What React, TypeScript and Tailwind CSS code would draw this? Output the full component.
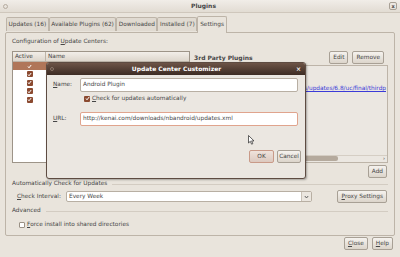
const Btn = ({ children, w, focus }: { children: React.ReactNode; w?: string; focus?: boolean }) => (
  <div
    className={`h-[13px] ${w ?? ""} px-[3px] flex items-center justify-center rounded-[2px] border ${
      focus ? "border-[#c99a88] bg-gradient-to-b from-[#efe3dc] to-[#dcc9bf]" : "border-[#a8a095] bg-gradient-to-b from-[#f5f2ee] to-[#dcd5cb]"
    } text-[#464646]`}
  >
    {children}
  </div>
);

const Check = ({ white }: { white?: boolean }) =>
  white ? (
    <div className="w-[6px] h-[6px] rounded-[1px] border border-[#9a9185] bg-white" />
  ) : (
    <div className="w-[6px] h-[6px] rounded-[1px] bg-[#8b4a30] flex items-center justify-center">
      <svg width="5" height="5" viewBox="0 0 5 5">
        <path d="M1 2.5 L2 3.8 L4.2 1" stroke="#fff" strokeWidth="1" fill="none" />
      </svg>
    </div>
  );

const U = ({ c }: { c: string }) => <span className="underline">{c}</span>;

export default function App() {
  const tabs = ["Updates (16)", "Available Plugins (62)", "Downloaded", "Installed (7)"];
  return (
    <div className="relative w-[400px] h-[257px] overflow-hidden bg-[#e9e4dc] text-[5.8px] leading-none text-[#464646] font-['DejaVu_Sans',sans-serif]">
      {/* window title */}
      <div className="h-[13px] flex items-center px-[3px] bg-gradient-to-b from-[#f1ede8] to-[#e2dcd3] border-b border-[#cfc7bc]">
        <div className="w-[5px] h-[5px] rounded-full border border-[#b5ab9f]" />
        <div className="flex-1 text-center font-bold pl-[10px] text-[6px]">Plugins</div>
        <div className="w-[8px] h-[8px] rounded-[2px] border border-[#a8a095] flex items-center justify-center text-[5px] font-bold">
          x
        </div>
      </div>

      {/* tabs */}
      <div className="mt-[1px] h-[18px] flex items-end pl-[6px] relative z-10">
        {tabs.map((t) => (
          <div
            key={t}
            className="h-[14px] px-[1.5px] flex items-center border border-b-0 border-[#bdb4a8] rounded-t-[2px] bg-[#e0dad1] mb-px"
          >
            {t}
          </div>
        ))}
        <div className="h-[17px] px-[2px] flex items-center border border-b-0 border-[#bdb4a8] rounded-t-[2px] bg-[#e9e4dc] -mb-px relative">
          Settings
        </div>
      </div>

      {/* panel */}
      <div className="mx-[5px] h-[204px] border border-[#bdb4a8] rounded-[2px] px-[6px] flex flex-col">
        <div className="mt-[6px] h-[6px]">
          Configuration of <U c="U" />pdate Centers:
        </div>

        <div className="mt-[6px] flex gap-[3px] h-[127px]">
          {/* table */}
          <div className="w-[178px] h-[112px] border border-[#9d9488] bg-white flex flex-col">
            <div className="h-[10px] flex bg-gradient-to-b from-[#f2eee9] to-[#ddd6cc] border-b border-[#bdb4a8]">
              <div className="w-[33px] pl-[2px] flex items-center border-r border-[#bdb4a8]">Active</div>
              <div className="pl-[2px] flex items-center">Name</div>
            </div>
            <div className="h-[8px] bg-[#b07659] flex">
              <div className="w-[33px] flex items-center justify-center">
                <svg width="5" height="5" viewBox="0 0 5 5">
                  <path d="M1 2.5 L2 3.8 L4.2 1" stroke="#fff" strokeWidth="1" fill="none" />
                </svg>
              </div>
            </div>
            {[0, 1, 2, 3].map((i) => (
              <div key={i} className="h-[8.5px] flex">
                <div className="w-[33px] flex items-center justify-center">
                  <Check />
                </div>
              </div>
            ))}
          </div>

          {/* right side */}
          <div className="flex-1 flex flex-col">
            <div className="h-[13px] flex items-center">
              <div className="font-bold flex-1 pl-[1px] text-[6px]">3rd Party Plugins</div>
              <Btn>Edit</Btn>
              <div className="w-[4px]" />
              <Btn>Remove</Btn>
              <div className="w-[4px]" />
            </div>
            <div className="mt-[1px] h-[98px] border border-[#bdb4a8] bg-[#ebe7e1] flex flex-col">
              <div className="flex-1 pt-[20px] flex justify-end pr-[1px]">
                <span className="text-[#3b3bd8] underline whitespace-nowrap">s/updates/6.8/uc/final/thirdp</span>
              </div>
              <div className="h-[6px] mb-[1px] flex items-center border-t border-[#d5cec4]">
                <div className="ml-[105px] w-[39px] h-[5px] rounded-[2px] bg-[#b5aa9d]" />
                <div className="flex-1" />
                <div className="text-[5px] pr-[2px]">›</div>
              </div>
            </div>
            <div className="mt-[2px] flex justify-end pr-[1px]">
              <Btn>Add</Btn>
            </div>
          </div>
        </div>

        <div className="mt-[3px] h-[6px] flex items-center gap-[5px]">
          <span className="whitespace-nowrap">Automatically Check for Updates</span>
          <div className="flex-1 border-t border-[#d3ccc2]" />
        </div>

        <div className="mt-[3px] h-[13px] flex items-center pl-[5px]">
          <div className="w-[49px]">
            <U c="C" />heck Interval:
          </div>
          <div className="w-[246px] h-[11px] bg-white border border-[#b8afa3] rounded-[2px] flex items-center">
            <div className="flex-1 pl-[2px]">Every Week</div>
            <div className="w-[10px] h-full border-l border-[#c9c1b6] bg-[#ebe6df] flex items-center justify-center">
              <svg width="5" height="4" viewBox="0 0 5 4">
                <path d="M0.8 1 L2.5 3 L4.2 1" stroke="#555" strokeWidth="0.9" fill="none" />
              </svg>
            </div>
          </div>
          <div className="flex-1" />
          <Btn>
            <span>
              <U c="P" />roxy Settings
            </span>
          </Btn>
          <div className="w-[1px]" />
        </div>

        <div className="mt-[5px] h-[6px] flex items-center gap-[5px]">
          <span>Advanced</span>
          <div className="flex-1 border-t border-[#d3ccc2]" />
        </div>

        <div className="mt-[7px] h-[7px] flex items-center pl-[7px] gap-[2px]">
          <Check white />
          <span>
            <U c="F" />orce install into shared directories
          </span>
        </div>
      </div>

      {/* bottom buttons */}
      <div className="mt-[1px] flex justify-end gap-[4px] pr-[7px]">
        <Btn>
          <span>
            <U c="C" />lose
          </span>
        </Btn>
        <Btn>
          <span>
            <U c="H" />elp
          </span>
        </Btn>
      </div>

      {/* dialog */}
      <div className="absolute left-[46px] top-[62px] w-[260px] h-[117px] rounded-[3px] border border-[#5e4c42] bg-[#ebe7e1] shadow-[1px_1px_2px_rgba(0,0,0,0.3)] flex flex-col overflow-hidden">
        <div className="h-[12px] flex items-center px-[3px] bg-gradient-to-b from-[#6d5447] to-[#3d2c24] text-white">
          <div className="w-[4px] h-[4px] rounded-full border border-[#8a7568]" />
          <div className="flex-1 text-center font-bold pl-[4px] text-[6px]">Update Center Customizer</div>
          <div className="w-[7px] h-[7px] flex items-center justify-center text-[6px] font-bold">×</div>
        </div>
        <div className="mt-[3px] flex items-center pl-[6px]">
          <div className="w-[27px]">
            <U c="N" />ame:
          </div>
          <div className="w-[218px] h-[14px] bg-white border border-[#b8afa3] rounded-[2px] flex items-center pl-[2px]">
            Android Plugin
          </div>
        </div>
        <div className="mt-[3px] h-[7px] flex items-center pl-[37px] gap-[2px]">
          <Check />
          <span>
            <U c="C" />heck for updates automatically
          </span>
        </div>
        <div className="mt-[10px] flex items-center pl-[6px]">
          <div className="w-[27px]">
            <U c="U" />RL:
          </div>
          <div className="w-[218px] h-[14px] bg-white border border-[#e0a48d] rounded-[2px] flex items-center pl-[2px] whitespace-nowrap">
            http://kenai.com/downloads/nbandroid/updates.xml
          </div>
        </div>
        <div className="mt-[24px] flex justify-end gap-[3px] pr-[4px]">
          <Btn w="w-[25px]" focus>
            OK
          </Btn>
          <Btn w="w-[24px]">Cancel</Btn>
        </div>
      </div>

      {/* mouse cursor */}
      <svg className="absolute left-[248px] top-[135px]" width="7" height="10" viewBox="0 0 7 10">
        <path d="M0.5 0.5 L0.5 8 L2.3 6.3 L3.6 9.2 L4.8 8.7 L3.6 5.9 L6 5.9 Z" fill="#fff" stroke="#222" strokeWidth="0.7" />
      </svg>
    </div>
  );
}
